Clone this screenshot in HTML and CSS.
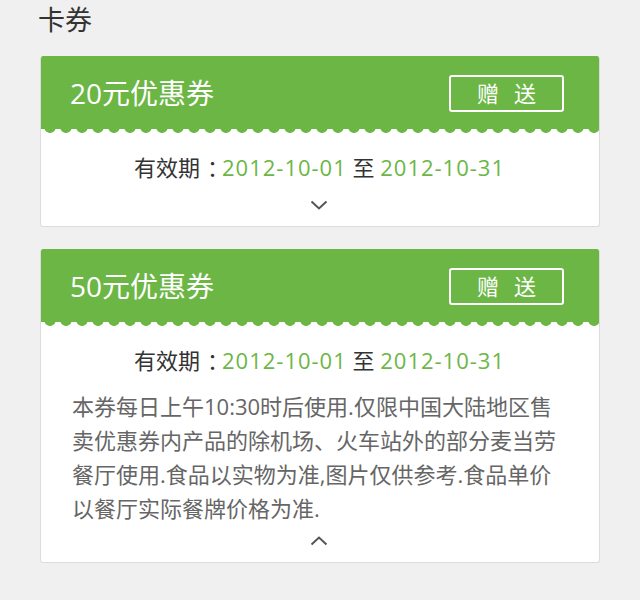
FILE: index.html
```html
<!DOCTYPE html>
<html lang="zh-CN">
<head>
<meta charset="utf-8">
<title>卡券</title>
<link rel="stylesheet" href="styles.css">
</head>
<body>
<div class="page">
  <h1 class="title">卡券</h1>

  <div class="card">
    <div class="card-head">
      <span class="card-name">20元优惠券</span>
      <button class="gift">赠&nbsp;&nbsp;&nbsp;送</button>
    </div>
    <div class="wave"></div>
    <div class="card-body">
      <p class="valid">有效期<span class="colon">：</span><span class="date">2012-10-01</span> 至 <span class="date">2012-10-31</span></p>
      <div class="toggle">
        <svg width="18" height="10" viewBox="0 0 18 10"><polyline points="1.5,1.5 9,8.5 16.5,1.5" fill="none" stroke="#555" stroke-width="2"/></svg>
      </div>
    </div>
  </div>

  <div class="card">
    <div class="card-head">
      <span class="card-name">50元优惠券</span>
      <button class="gift">赠&nbsp;&nbsp;&nbsp;送</button>
    </div>
    <div class="wave"></div>
    <div class="card-body">
      <p class="valid">有效期<span class="colon">：</span><span class="date">2012-10-01</span> 至 <span class="date">2012-10-31</span></p>
      <p class="desc">本券每日上午10:30时后使用.仅限中国大陆地区售卖优惠券内产品的除机场、火车站外的部分麦当劳餐厅使用.食品以实物为准,图片仅供参考.食品单价以餐厅实际餐牌价格为准.</p>
      <div class="toggle toggle-up">
        <svg width="18" height="10" viewBox="0 0 18 10"><polyline points="1.5,8.5 9,1.5 16.5,8.5" fill="none" stroke="#555" stroke-width="2"/></svg>
      </div>
    </div>
  </div>
</div>
</body>
</html>
```

FILE: styles.css
```css
* { box-sizing: border-box; }

html, body {
  margin: 0;
  padding: 0;
  background: #f0f0f0;
}

body {
  font-family: "Open Sans", "Noto Sans CJK SC", sans-serif;
  color: #333;
}

.page {
  padding: 0 40px 20px 40px;
}

.title {
  margin: 0 0 16px -2px;
  font-size: 27px;
  font-weight: normal;
  line-height: 40px;
  color: #333;
}

.card {
  background: #fff;
  border: 1px solid #dcdcdc;
  border-top: none;
  border-radius: 3px;
  margin-bottom: 22px;
  overflow: hidden;
}

.card-head {
  height: 73px;
  background: #6cb646;
  display: flex;
  align-items: center;
  justify-content: space-between;
  padding: 0 36px 0 30px;
  margin: 0 -1px;
}

.card-name {
  color: #fff;
  font-size: 28px;
  line-height: 1;
}

.gift {
  width: 115px;
  height: 37px;
  background: transparent;
  border: 2px solid #fff;
  border-radius: 3px;
  color: #fff;
  font-family: "Noto Sans CJK SC", sans-serif;
  font-size: 22px;
  line-height: 1;
  padding: 0 0 3px 0;
  margin-top: 2px;
}

.wave {
  height: 4px;
  margin: 0 -1px;
  background-image: radial-gradient(circle at 8px -2px, #6cb646 5.5px, transparent 6.2px);
  background-size: 16px 4px;
  background-repeat: repeat-x;
  background-position: 2px 0;
}

.card-body {
  padding: 17px 32px 11px 31px;
}

.valid {
  margin: 0;
  text-align: center;
  font-size: 22px;
  line-height: 34px;
  color: #333;
}

.colon {
  display: inline-block;
  width: 22px;
  padding-left: 3px;
  text-align: center;
  font-feature-settings: "halt" 1;
}

.date {
  color: #6cb646;
  letter-spacing: 1px;
}

.desc {
  margin: 12px 0 0 0;
  font-size: 22px;
  line-height: 34px;
  color: #666;
}

.toggle {
  height: 20px;
  display: flex;
  align-items: center;
  justify-content: center;
  margin-top: 11px;
  padding-right: 2px;
}

.toggle-up {
  margin-top: 6px;
}

.toggle svg {
  display: block;
}
```
